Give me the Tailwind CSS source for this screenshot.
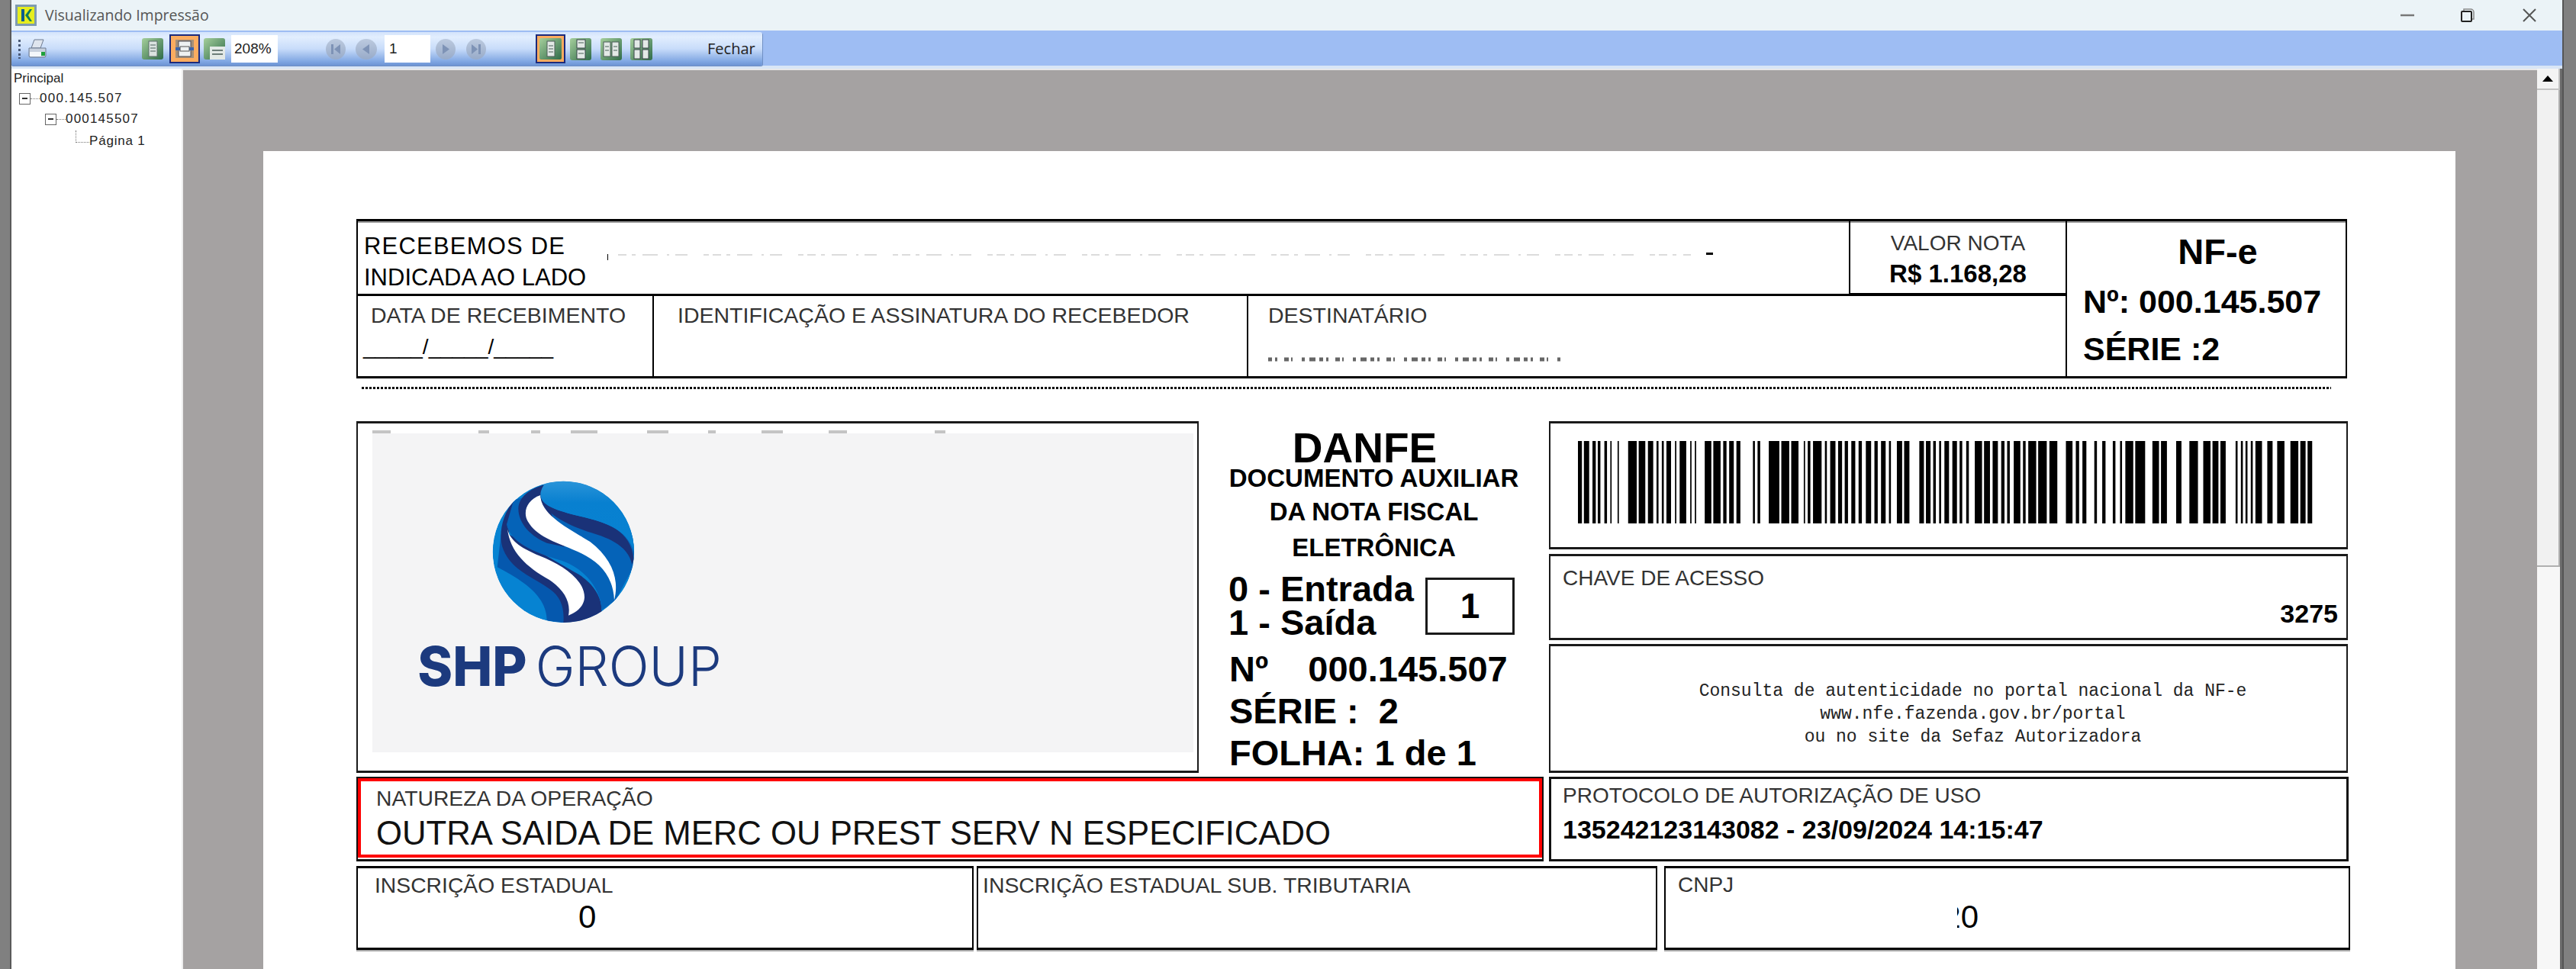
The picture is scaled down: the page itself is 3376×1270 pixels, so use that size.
<!DOCTYPE html>
<html lang="pt-BR">

<head>
    <meta charset="UTF-8">
    <title>Visualizando Impressão</title>
    <script src="https://cdn.jsdelivr.net/npm/@tailwindcss/browser@4"></script>
</head>

<body class="bg-white overflow-hidden">
    <svg class="absolute w-0 h-0">
        <defs>
            <linearGradient id="green" x1="0" y1="0" x2="1" y2="1">
                <stop offset="0" stop-color="#a5cf9c" />
                <stop offset="1" stop-color="#2f6b48" />
            </linearGradient>
            <linearGradient id="navbtn" x1="0" y1="0" x2="0" y2="1">
                <stop offset="0" stop-color="#bccadf" />
                <stop offset="1" stop-color="#98abc9" />
            </linearGradient>
            <linearGradient id="lobe" x1="0" y1="0" x2="0" y2="1">
                <stop offset="0" stop-color="#2f97da" />
                <stop offset="0.3" stop-color="#0880d0" />
                <stop offset="1" stop-color="#0683d2" />
            </linearGradient>
            <clipPath id="ball">
                <circle cx="595" cy="370" r="278" />
            </clipPath>
        </defs>
    </svg>

    <div class="flex w-[3376px] h-[1270px] font-['Liberation_Sans',sans-serif] text-black">
        <!-- left window edge -->
        <div class="w-[15px] bg-[#808080] border-r-2 border-[#5a5a5a]"></div>

        <div class="w-[3343px] flex flex-col">
            <!-- title bar -->
            <div class="h-[40px] bg-[#ebf3f7] flex items-center">
                <svg class="ml-[5px] w-[28px] h-[28px]" viewBox="0 0 28 28">
                    <rect width="28" height="28" fill="#7e9bb0" />
                    <rect x="3" y="3" width="22" height="22" fill="#e6ee1e" />
                    <rect x="8" y="6" width="4" height="16" fill="#0d5d8e" />
                    <path d="M13 14 19 6h3l-5 8 5 8h-3z" fill="#0f7d5a" />
                </svg>
                <span class="ml-[11px] font-['Open_Sans',sans-serif] text-[19.500px] text-[#555]">Visualizando Impressão</span>
                <div class="ml-auto flex items-center">
                    <svg class="w-[18px] h-[18px]" viewBox="0 0 18 18"><path d="M0 9h18" stroke="#777" stroke-width="2.5" /></svg>
                    <svg class="ml-[61px] w-[18px] h-[18px]" viewBox="0 0 18 18" fill="none"><path d="M4 3V1h9a4 4 0 0 1 4 4v9h-2" stroke="#888" stroke-width="1.5" /><rect x="1" y="4" width="13" height="13" rx="1" stroke="#222" stroke-width="2" /></svg>
                    <svg class="ml-[63px] mr-[34px] w-[18px] h-[18px]" viewBox="0 0 18 18"><path d="M1 1l16 16M17 1 1 17" stroke="#555" stroke-width="2" /></svg>
                </div>
            </div>

            <!-- toolbar -->
            <div class="h-[50px] bg-[#9ebdf3] border-b-4 border-[#d9e6f6] pt-[2px]">
                <div class="w-[984px] h-[44px] rounded-r-[3px] flex items-center bg-[linear-gradient(180deg,#d3e3fb_0%,#e2eefe_15%,#c8dcfa_50%,#7fa6e2_88%,#6c93d3_100%)] shadow-[1px_1px_0_#6f8fc4]">
                    <svg class="ml-[9px] w-[4px] h-[26px]" viewBox="0 0 4 26" fill="#4a5a78"><rect y="1" width="3" height="3" /><rect y="7" width="3" height="3" /><rect y="13" width="3" height="3" /><rect y="19" width="3" height="3" /><rect y="24" width="3" height="2" /></svg>
                    <svg class="ml-[8px] w-[26px] h-[26px]" viewBox="0 0 26 26">
                        <path d="M9 1h12l-4 11H5z" fill="#dfe5ee" stroke="#6d7a90" />
                        <path d="M2 12h22v10a2 2 0 0 1-2 2H4a2 2 0 0 1-2-2z" fill="#c9d2df" stroke="#6d7a90" />
                        <rect x="3" y="17" width="15" height="6" fill="#f4f7fb" />
                        <rect x="18" y="17" width="5" height="5" fill="#1fa13c" />
                    </svg>

                    <svg class="ml-[124px] w-[28px] h-[28px]" viewBox="0 0 28 28">
                        <rect width="28" height="28" rx="3" fill="url(#green)" />
                        <rect x="9" y="4" width="11" height="20" fill="#dbe3e0" stroke="#5d6f6a" />
                        <path d="M11 9h7M11 13h7M11 17h7" stroke="#7d8d88" stroke-width="1.5" />
                    </svg>
                    <div class="ml-[8px] w-[40px] h-[38px] border-2 border-[#1c2a7c] bg-[#fbac60] flex items-center justify-center">
                        <svg class="w-[28px] h-[26px]" viewBox="0 0 28 26">
                            <rect x="2" y="1" width="24" height="24" fill="#a58f78" />
                            <rect x="6" y="3" width="16" height="20" fill="#eef1f2" stroke="#4a4a55" />
                            <path d="M2 13h24" stroke="#3b64ad" stroke-width="4" />
                            <rect x="8" y="10" width="12" height="6" fill="#eef1f2" stroke="#555" />
                        </svg>
                    </div>
                    <svg class="ml-[5px] w-[28px] h-[28px]" viewBox="0 0 28 28">
                        <rect width="28" height="28" rx="3" fill="url(#green)" />
                        <path d="M8 28V11h20v17z" fill="#e3e9e6" />
                        <path d="M11 16h14M11 21h14" stroke="#6d7d78" stroke-width="2" />
                    </svg>
                    <div class="ml-[8px] w-[61px] h-[36px] bg-white flex items-center pl-[4px] text-[19px] text-[#222]">208%</div>

                    <svg class="ml-[63px] w-[26px] h-[27px]" viewBox="0 0 26 27"><ellipse cx="13" cy="13.5" rx="13" ry="13.5" fill="url(#navbtn)" /><path d="M7 7h3v13H7zM19 7v13l-8-6.500z" fill="#7e93b6" /></svg>
                    <svg class="ml-[13px] w-[28px] h-[27px]" viewBox="0 0 28 27"><ellipse cx="14" cy="13.500" rx="14" ry="13.500" fill="url(#navbtn)" /><path d="M18 7v13l-9-6.500z" fill="#7e93b6" /></svg>
                    <div class="ml-[10px] w-[60px] h-[36px] bg-white flex items-center pl-[6px] text-[19px] text-[#222]">1</div>
                    <svg class="ml-[7px] w-[26px] h-[27px]" viewBox="0 0 26 27"><ellipse cx="13" cy="13.500" rx="13" ry="13.500" fill="url(#navbtn)" /><path d="M9 7v13l9-6.500z" fill="#7e93b6" /></svg>
                    <svg class="ml-[14px] w-[26px] h-[27px]" viewBox="0 0 26 27"><ellipse cx="13" cy="13.500" rx="13" ry="13.500" fill="url(#navbtn)" /><path d="M7 7v13l8-6.500zM16 7h3v13h-3z" fill="#7e93b6" /></svg>

                    <div class="ml-[65px] w-[39px] h-[38px] border-2 border-[#1c2a7c] bg-[#fbac60] flex items-center justify-center">
                        <svg class="w-[29px] h-[28px]" viewBox="0 0 29 28">
                            <rect width="29" height="28" rx="2" fill="url(#green)" />
                            <rect x="10" y="4" width="10" height="20" fill="#e3e9e6" stroke="#4d5d58" />
                            <path d="M12 10h6M12 14h6M12 18h6" stroke="#7d8d88" stroke-width="1.5" />
                        </svg>
                    </div>
                    <svg class="ml-[6px] w-[28px] h-[29px]" viewBox="0 0 28 29">
                        <rect width="28" height="29" rx="3" fill="url(#green)" />
                        <rect x="9" y="2" width="11" height="11" fill="#e3e9e6" stroke="#39454a" />
                        <rect x="9" y="15" width="11" height="12" fill="#e3e9e6" stroke="#39454a" />
                        <path d="M11 6h7M11 20h7" stroke="#7d8d88" stroke-width="1.500" />
                    </svg>
                    <svg class="ml-[12px] w-[28px] h-[29px]" viewBox="0 0 28 29">
                        <rect width="28" height="29" rx="3" fill="url(#green)" />
                        <rect x="4" y="5" width="9" height="19" fill="#e3e9e6" stroke="#4d5d58" />
                        <rect x="15" y="5" width="9" height="19" fill="#e3e9e6" stroke="#4d5d58" />
                        <path d="M6 11h5M6 16h5M17 11h5M17 16h5" stroke="#7d8d88" stroke-width="1.500" />
                    </svg>
                    <svg class="ml-[11px] w-[29px] h-[29px]" viewBox="0 0 29 29">
                        <rect width="29" height="29" rx="3" fill="url(#green)" />
                        <rect x="5" y="2" width="8" height="11" fill="#e3e9e6" stroke="#39454a" />
                        <rect x="16" y="2" width="8" height="11" fill="#e3e9e6" stroke="#39454a" />
                        <rect x="5" y="15" width="8" height="12" fill="#e3e9e6" stroke="#39454a" />
                        <rect x="16" y="15" width="8" height="12" fill="#e3e9e6" stroke="#39454a" />
                    </svg>
                    <span class="ml-[72px] font-['Open_Sans',sans-serif] text-[20px] text-[#222]">Fechar</span>
                </div>
            </div>

            <div class="flex flex-1 min-h-0">
                <!-- tree -->
                <div class="w-[225px] bg-white border-r-2 border-[#eeeeee] text-[17px] text-[#222]">
                    <div class="ml-[3px] mt-[3px] leading-[20px]">Principal</div>
                    <div class="flex items-center ml-[10px] mt-[6px] h-[20px]">
                        <span class="w-[15px] h-[15px] border border-[#666] flex items-center justify-center"><span class="w-[7px] h-[2px] bg-[#333]"></span></span>
                        <span class="w-[12px] border-t border-dotted border-[#777]"></span>
                        <span class="tracking-[1.300px]">000.145.507</span>
                    </div>
                    <div class="flex items-center ml-[44px] mt-[7px] h-[20px]">
                        <span class="w-[15px] h-[15px] border border-[#666] flex items-center justify-center"><span class="w-[7px] h-[2px] bg-[#333]"></span></span>
                        <span class="w-[12px] border-t border-dotted border-[#777]"></span>
                        <span class="tracking-[1.200px]">000145507</span>
                    </div>
                    <div class="flex items-center ml-[84px] mt-[9px] h-[20px]">
                        <span class="w-[18px] h-[16px] -mt-[12px] border-l border-b border-dotted border-[#777]"></span>
                        <span class="tracking-[0.800px]">Página 1</span>
                    </div>
                </div>

                <!-- preview area -->
                <div class="w-[3085px] bg-[#a5a2a2] border-t-2 border-[#e8e8e8] overflow-hidden pt-[106px] pl-[105px]">
                    <div class="w-[2873px] h-[1100px] bg-white pt-[89px] pl-[122px]">

                        <!-- canhoto -->
                        <div class="w-[2609px] h-[209px] flex border-t-[3px] border-b-[3px] border-x-2 border-black shadow-[inset_0_2px_0_#999]">
                            <div class="w-[2238px]">
                                <div class="h-[98px] flex items-start border-b-[3px] border-black">
                                    <div class="relative w-[1956px] h-[95px] border-r-2 border-black pt-[12px] pl-[8px] text-[31px] leading-[41px]">
                                        <div class="tracking-[1.200px]">RECEBEMOS DE</div>
                                        <div>INDICADA AO LADO</div>
                                        <svg class="absolute left-[327px] top-[41px] w-[1460px] h-[12px]" viewBox="0 0 1460 12">
                                            <path d="M0 2v8" stroke="#000" stroke-width="2" />
                                            <path d="M14 3H1420" stroke="#dcdcdc" stroke-width="2" stroke-dasharray="11 7 5 9 20 12 3 8 16 21 7 5" />
                                            <path d="M1440 0h9" stroke="#000" stroke-width="6" />
                                        </svg>
                                    </div>
                                    <div class="w-[282px] h-[98px] border-b-[4px] border-black text-center pt-[12px]">
                                        <div class="text-[28px] leading-[34px] text-[#333]">VALOR NOTA</div>
                                        <div class="text-[33px] leading-[40px] font-bold mt-[3px]">R$ 1.168,28</div>
                                    </div>
                                </div>
                                <div class="h-[105px] flex text-[28.500px] leading-[34px] text-[#333]">
                                    <div class="w-[388px] border-r-2 border-black pt-[8px]">
                                        <div class="pl-[17px]">DATA DE RECEBIMENTO</div>
                                        <div class="pl-[7px] mt-[8px] text-[28px] text-black whitespace-nowrap">_____/_____/_____</div>
                                    </div>
                                    <div class="w-[779px] border-r-2 border-black pt-[8px] pl-[31px]">IDENTIFICAÇÃO E ASSINATURA DO RECEBEDOR</div>
                                    <div class="relative flex-1 pt-[8px] pl-[26px]">
                                        DESTINATÁRIO
                                        <svg class="absolute left-[26px] top-[80px] w-[384px] h-[6px]" viewBox="0 0 384 6">
                                            <path d="M0 3H384" stroke="#666" stroke-width="5" stroke-dasharray="5 4 3 9 6 3 2 12 4 6 8 5" />
                                        </svg>
                                    </div>
                                </div>
                            </div>
                            <div class="flex-1 border-l-2 border-black">
                                <div class="pl-[30px] pt-[13px] text-center text-[47px] leading-[54px] font-bold">NF-e</div>
                                <div class="pl-[21px] mt-[13px] text-[43px] leading-[50px] font-bold">Nº: 000.145.507</div>
                                <div class="pl-[21px] mt-[12px] text-[43px] leading-[50px] font-bold">SÉRIE :2</div>
                            </div>
                        </div>

                        <div class="w-[2581px] ml-[7px] mt-[11px] h-[3px] bg-[repeating-linear-gradient(90deg,#000_0_3px,transparent_3px_5px)]"></div>

                        <!-- cabecalho -->
                        <div class="flex mt-[42px] h-[461px]">
                            <div class="w-[1104px] border-y-[3px] border-x-2 border-[#1a1a1a] pl-[19px] pt-[9px]">
                                <svg class="block w-[900px] h-[4px]" viewBox="0 0 900 4">
                                    <path d="M0 2H760" stroke="#c4c4c4" stroke-width="4" stroke-dasharray="24 115 14 55 12 40 35 65 28 52 10 60 28 60" />
                                </svg>
                                <div class="w-[1076px] h-[418px] bg-[#f4f4f5] pl-[52px] pt-[32px]">
                                    <svg class="block w-[460px] h-[320px]" viewBox="0 0 1380 960">
                                        <g clip-path="url(#ball)">
                                            <circle cx="595" cy="370" r="278" fill="#0683d2" />
                                            <path d="M335 430C430 480 530 540 530 640L600 650 620 500 350 300Z" fill="#0558ae" />
                                            <path d="M400 170C355 220 340 300 355 350 385 440 470 465 540 515 585 545 600 590 595 650L750 650 745 595C745 540 700 480 640 450L380 300Z" fill="#1a3278" />
                                            <path d="M372 262C385 330 470 370 590 405 680 435 745 520 745 600L800 560 880 410 880 300 520 190 505 140 400 165Z" fill="#0563b8" />
                                            <path d="M375 280C385 330 440 360 500 385 590 420 680 480 678 550 675 590 640 610 615 620 625 570 600 520 540 480 450 430 385 370 375 280Z" fill="#ffffff" />
                                            <path d="M545 100C470 115 420 150 418 200 418 260 470 310 530 335L600 350 520 150Z" fill="#1a3278" />
                                            <path d="M505 147C450 165 435 215 455 250 490 310 560 330 630 360 720 395 790 450 795 560 815 480 790 400 700 330 620 280 505 225 505 147Z" fill="#ffffff" />
                                            <path d="M505 145C510 185 560 205 640 225 740 250 860 270 872 400L865 420C850 340 760 310 690 290 600 260 505 210 505 145Z" fill="#1a3278" />
                                            <path d="M505 145C505 185 560 205 640 225 740 250 860 270 880 400L900 100 540 80C520 100 505 125 505 145Z" fill="url(#lobe)" />
                                        </g>
                                        <text x="22" y="897" font-family="Inter" font-weight="800" font-size="216" fill="#1c3a7e" textLength="430" lengthAdjust="spacingAndGlyphs">SHP</text>
                                        <text x="485" y="897" font-family="Inter" font-weight="300" font-size="216" fill="#1c3a7e" textLength="732" lengthAdjust="spacingAndGlyphs">GROUP</text>
                                    </svg>
                                </div>
                            </div>

                            <div class="w-[459px] pt-[12px] font-bold">
                                <div class="pr-[24px] text-center text-[55px] leading-[47px]">DANFE</div>
                                <div class="text-center text-[33px] leading-[30px] mt-[1px]">DOCUMENTO AUXILIAR</div>
                                <div class="text-center text-[33px] leading-[30px] mt-[14px]">DA NOTA FISCAL</div>
                                <div class="text-center text-[33px] leading-[30px] mt-[17px]">ELETRÔNICA</div>
                                <div class="flex mt-[17px] pl-[39px]">
                                    <div class="w-[258px] text-[47px] leading-[44px]">
                                        <div>0 - Entrada</div>
                                        <div>1 - Saída</div>
                                    </div>
                                    <div class="w-[117px] h-[75px] mt-[7px] border-[3px] border-[#1a1a1a] flex items-center justify-center text-[46px]">1</div>
                                </div>
                                <div class="pl-[40px] mt-[17px] text-[47px] leading-[44px] whitespace-pre">Nº    000.145.507</div>
                                <div class="pl-[40px] mt-[11px] text-[47px] leading-[44px] whitespace-pre">SÉRIE :  2</div>
                                <div class="pl-[40px] mt-[11px] text-[47px] leading-[44px]">FOLHA: 1 de 1</div>
                            </div>

                            <div class="w-[1047px] flex flex-col">
                                <div class="h-[168px] border-y-[3px] border-x-2 border-[#1a1a1a] pt-[23px] pl-[36px]">
                                    <svg class="block w-[964px] h-[108px]" viewBox="56 0 1114 100" preserveAspectRatio="none" fill="none" stroke="#000" stroke-width="200">
                                        <path d="M56 0H62M65 0H73M78 0H83M86 0H90M96 0H100M105 0H107M116 0H118M132 0H145M148 0H158M162 0H170M175 0H178M183 0H186M190 0H197M203 0H205M210 0H220M226 0H228M233 0H235M248 0H258M261 0H272M276 0H281M285 0H292M296 0H302M321 0H324M328 0H332M345 0H361M364 0H376M379 0H390M398 0H400M404 0H408M412 0H425M430 0H433M438 0H446M450 0H456M460 0H465M470 0H476M481 0H486M492 0H500M505 0H510M515 0H522M527 0H530M539 0H547M550 0H558M573 0H580M583 0H590M594 0H598M603 0H606M611 0H618M623 0H630M634 0H638M644 0H648M657 0H668M671 0H680M684 0H692M697 0H702M706 0H710M716 0H726M730 0H734M738 0H750M753 0H766M770 0H782M795 0H805M810 0H815M820 0H826M838 0H842M850 0H855M866 0H870M877 0H880M885 0H897M900 0H915M926 0H936M939 0H948M962 0H970M982 0H995M1003 0H1014M1017 0H1026M1029 0H1037M1052 0H1055M1060 0H1063M1067 0H1070M1075 0H1078M1082 0H1092M1100 0H1108M1115 0H1126M1135 0H1147M1150 0H1158M1161 0H1168" />
                                    </svg>
                                </div>
                                <div class="h-[113px] mt-[6px] border-y-[3px] border-x-2 border-[#1a1a1a] pt-[12px] pl-[16px] pr-[11px]">
                                    <div class="text-[28px] leading-[34px] text-[#333]">CHAVE DE ACESSO</div>
                                    <div class="mt-[9px] text-right text-[34px] leading-[40px] font-bold">3275</div>
                                </div>
                                <div class="h-[169px] mt-[5px] border-y-[3px] border-x-2 border-[#1a1a1a] pt-[44px] pl-[64px] text-center font-['Liberation_Mono',monospace] text-[23px] leading-[30px] text-[#222]">
                                    <div>Consulta de autenticidade no portal nacional da NF-e</div>
                                    <div>www.nfe.fazenda.gov.br/portal</div>
                                    <div>ou no site da Sefaz Autorizadora</div>
                                </div>
                            </div>
                        </div>

                        <!-- natureza / protocolo -->
                        <div class="flex gap-[7px] mt-[5px] h-[111px]">
                            <div class="w-[1556px] border-t-2 border-x-2 border-b-[3px] border-[#111] pb-[2px]">
                                <div class="h-full border-4 border-[#ff0000] pl-[20px] pt-[5px]">
                                    <div class="text-[28.300px] leading-[34px] text-[#333]">NATUREZA DA OPERAÇÃO</div>
                                    <div class="text-[43.700px] leading-[50px] mt-[4px] text-[#111] whitespace-nowrap">OUTRA SAIDA DE MERC OU PREST SERV N ESPECIFICADO</div>
                                </div>
                            </div>
                            <div class="w-[1048px] border-[3px] border-[#111] pl-[15px] pt-[5px]">
                                <div class="text-[28px] leading-[34px] text-[#333]">PROTOCOLO DE AUTORIZAÇÃO DE USO</div>
                                <div class="text-[34px] leading-[40px] mt-[7px] font-bold whitespace-nowrap">135242123143082 - 23/09/2024 14:15:47</div>
                            </div>
                        </div>

                        <!-- inscricoes -->
                        <div class="flex mt-[6px] h-[110px]">
                            <div class="w-[809px] border-y-[3px] border-x-2 border-black shadow-[0_2px_0_#aaa] pl-[22px] pt-[5px]">
                                <div class="text-[28.300px] leading-[34px] text-[#333]">INSCRIÇÃO ESTADUAL</div>
                                <div class="pl-[267px] text-[42px] leading-[50px]">0</div>
                            </div>
                            <div class="w-[892px] ml-[4px] border-y-[3px] border-x-2 border-black shadow-[0_2px_0_#aaa] pl-[6px] pt-[5px]">
                                <div class="text-[28.400px] leading-[34px] text-[#333]">INSCRIÇÃO ESTADUAL SUB. TRIBUTARIA</div>
                            </div>
                            <div class="w-[899px] ml-[9px] border-y-[3px] border-x-2 border-black shadow-[0_2px_0_#aaa] pl-[16px] pt-[5px]">
                                <div class="text-[28px] leading-[34px] text-[#333]">CNPJ</div>
                                <div class="ml-[366px] w-[28px] overflow-hidden flex justify-end text-[42px] leading-[50px]">20</div>
                            </div>
                        </div>
                    </div>
                </div>

                <!-- scrollbar -->
                <div class="w-[33px] bg-[#f7f7f7] border-r-[3px] border-[#6b6b6b] flex flex-col">
                    <div class="h-[28px] bg-[#f4f4f4] border-r-2 border-b-2 border-[#c4c4c4] flex items-center justify-center">
                        <svg class="w-[14px] h-[8px]" viewBox="0 0 14 8"><path d="M7 0l7 8H0z" fill="#000" /></svg>
                    </div>
                    <div class="h-[625px] bg-[#f1f1f1] border-r-2 border-b-2 border-[#b0b0b0]"></div>
                </div>
            </div>
        </div>

        <!-- right window edge -->
        <div class="w-[18px] bg-[#808080] border-l-2 border-[#555]"></div>
    </div>
</body>

</html>
